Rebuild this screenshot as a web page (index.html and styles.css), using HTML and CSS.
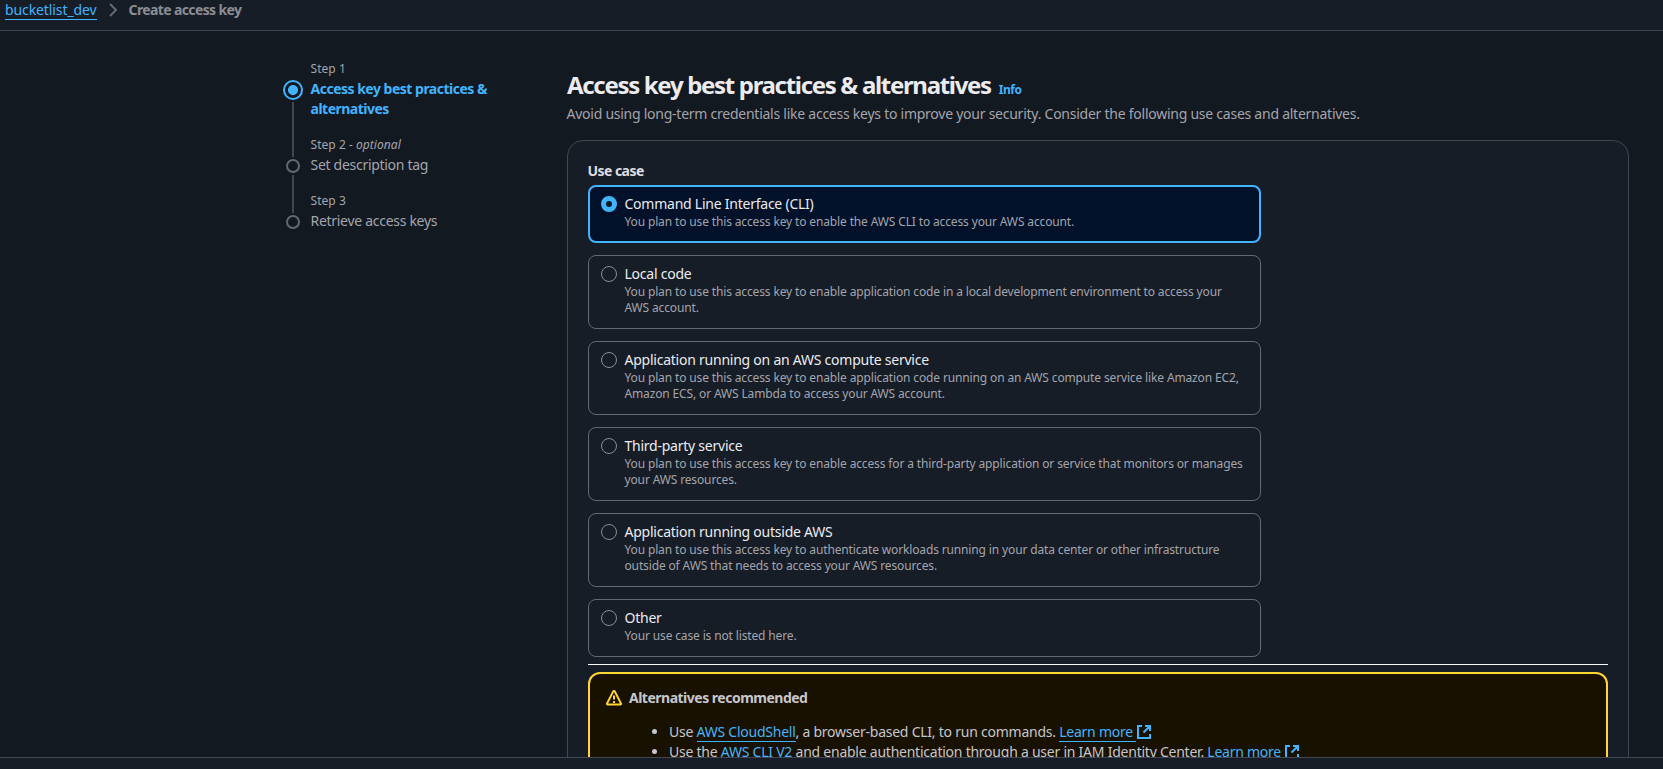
FILE: index.html
```html
<!DOCTYPE html>
<html lang="en">
<head>
<meta charset="utf-8">
<title>Create access key</title>
<link rel="stylesheet" href="styles.css">
</head>
<body>
<svg width="0" height="0" class="defs">
  <symbol id="external" viewBox="0 0 16 16"><path d="M6 2H2v12h12V10M9 2h5v5M13.5 2.5 7.5 8.5"/></symbol>
</svg>
<div class="app">
  <nav class="breadcrumbs">
    <a class="link" href="#">bucketlist_dev</a>
    <svg class="chevron" width="16" height="16" viewBox="0 0 16 16"><path d="m5 2 6 6-6 6"/></svg>
    <span class="current">Create access key</span>
  </nav>
  <div class="content">
    <aside class="steps">
      <div class="step active">
        <div class="rail"><span class="dot"></span><span class="line"></span></div>
        <div class="step-text"><div class="step-label">Step 1</div><div class="step-title">Access key best practices &amp;<br>alternatives</div></div>
      </div>
      <div class="step">
        <div class="rail"><span class="dot"></span><span class="line"></span></div>
        <div class="step-text"><div class="step-label">Step 2 <i>- optional</i></div><div class="step-title">Set description tag</div></div>
      </div>
      <div class="step">
        <div class="rail"><span class="dot"></span></div>
        <div class="step-text"><div class="step-label">Step 3</div><div class="step-title">Retrieve access keys</div></div>
      </div>
    </aside>
    <main class="main">
      <header class="heading"><h1>Access key best practices &amp; alternatives</h1><a class="info" href="#">Info</a></header>
      <p class="intro">Avoid using long-term credentials like access keys to improve your security. Consider the following use cases and alternatives.</p>
      <section class="panel">
        <div class="field-label">Use case</div>
        <div class="tiles">
          <label class="tile selected"><span class="radio"></span><span class="tile-text"><span class="tile-title">Command Line Interface (CLI)</span><span class="tile-desc">You plan to use this access key to enable the AWS CLI to access your AWS account.</span></span></label>
          <label class="tile"><span class="radio"></span><span class="tile-text"><span class="tile-title">Local code</span><span class="tile-desc">You plan to use this access key to enable application code in a local development environment to access your<br>AWS account.</span></span></label>
          <label class="tile"><span class="radio"></span><span class="tile-text"><span class="tile-title">Application running on an AWS compute service</span><span class="tile-desc">You plan to use this access key to enable application code running on an AWS compute service like Amazon EC2,<br>Amazon ECS, or AWS Lambda to access your AWS account.</span></span></label>
          <label class="tile"><span class="radio"></span><span class="tile-text"><span class="tile-title">Third-party service</span><span class="tile-desc">You plan to use this access key to enable access for a third-party application or service that monitors or manages<br>your AWS resources.</span></span></label>
          <label class="tile"><span class="radio"></span><span class="tile-text"><span class="tile-title">Application running outside AWS</span><span class="tile-desc">You plan to use this access key to authenticate workloads running in your data center or other infrastructure<br>outside of AWS that needs to access your AWS resources.</span></span></label>
          <label class="tile"><span class="radio"></span><span class="tile-text"><span class="tile-title">Other</span><span class="tile-desc">Your use case is not listed here.</span></span></label>
        </div>
        <hr class="divider">
        <div class="alert">
          <svg class="warning" width="16" height="16" viewBox="0 0 16 16"><path d="M7.1 1.6 1.1 13.4c-.3.6 0 1.1.7 1.1h12.4c.7 0 1-.5.7-1.1L8.9 1.6c-.4-.8-1.4-.8-1.8 0ZM8 5.5v4M8 11v2"/></svg>
          <div class="alert-body">
            <div class="alert-title">Alternatives recommended</div>
            <ul class="alert-list">
              <li>Use <a class="link" href="#">AWS CloudShell</a>, a browser-based CLI, to run commands. <a class="link ext" href="#">Learn more</a><svg class="external" width="16" height="16"><use href="#external"/></svg></li>
              <li>Use the <a class="link" href="#">AWS CLI V2</a> and enable authentication through a user in IAM Identity Center. <a class="link ext" href="#">Learn more</a><svg class="external" width="16" height="16"><use href="#external"/></svg></li>
            </ul>
          </div>
        </div>
      </section>
    </main>
  </div>
  <footer class="footer"></footer>
</div>
</body>
</html>
```
FILE: styles.css
```css
* { box-sizing: border-box; }
body {
  margin: 0;
  background: #131920;
  color: #c6c6cd;
  font: 14px/20px "Noto Sans", "Open Sans", sans-serif;
  letter-spacing: -0.24px;
}
.defs { display: none; }
.app { display: flex; flex-direction: column; height: 769px; overflow: hidden; white-space: nowrap; }
.link { color: #42b4ff; text-decoration: none; border-bottom: 1px solid #42b4ff; }
.breadcrumbs {
  flex: none;
  display: flex;
  align-items: flex-start;
  height: 31px;
  padding-left: 5px;
  background: #161d26;
  border-bottom: 1px solid #424650;
}
.breadcrumbs .link { height: 20px; letter-spacing: -0.1px; }
.chevron { margin: 2px 8px 0; fill: none; stroke: #656871; stroke-width: 2; }
.current { color: #8c8c94; font-weight: 700; letter-spacing: -0.62px; }
.content { flex: 1; min-height: 0; display: flex; overflow: hidden; }
.steps { flex: none; width: 283px; margin-left: 283px; padding-top: 28px; }
.step { display: flex; gap: 7.5px; }
.step:not(:last-child) .step-text { padding-bottom: 16px; }
.rail { flex: none; display: flex; flex-direction: column; align-items: center; width: 20px; padding-top: 24px; }
.active .rail { padding-top: 21px; }
.dot { flex: none; width: 14px; height: 14px; border: 2px solid #656871; border-radius: 50%; }
.active .dot { width: 20px; height: 20px; border-color: #42b4ff; background: radial-gradient(circle, #42b4ff 4.6px, transparent 5.4px); }
.line { flex: 1; width: 2px; margin: 2px 0 -22px; background: #424650; }
.step-label { font-size: 12px; line-height: 20px; color: #a4a4ad; letter-spacing: 0.05px; }
.step-title { color: #a4a4ad; letter-spacing: -0.29px; }
.active .step-title { color: #42b4ff; font-weight: 700; letter-spacing: -0.5px; }
.main { width: 1063px; padding-top: 38px; }
.heading { display: flex; align-items: baseline; gap: 8px; height: 31px; }
h1 { margin: 0 0 0 1px; color: #ebebf0; font-size: 24px; line-height: 31px; font-weight: 700; letter-spacing: -1.32px; }
.info { color: #42b4ff; font-size: 12px; font-weight: 700; text-decoration: none; letter-spacing: -0.45px; }
.intro { margin: 4px 0 16px 0.5px; color: #a4a4ad; letter-spacing: -0.25px; }
.panel { margin-left: 1px; height: 700px; padding: 20px 20px 0; background: #161d26; border: 1px solid #424650; border-radius: 16px; }
.field-label { color: #dedee3; font-weight: 700; letter-spacing: -0.55px; margin: 0 0 4px -0.5px; }
.tiles { display: grid; gap: 12px; width: 673px; }
.tile { display: flex; gap: 8px; padding: 8px 12px 12px; border: 1px solid #656871; border-radius: 8px; }
.selected { padding: 7px 11px 11px; border: 2px solid #42b4ff; background: #001129; }
.radio { flex: none; width: 16px; height: 16px; margin-top: 2px; border: 1px solid #8c8c94; border-radius: 50%; }
.selected .radio { border: 5px solid #42b4ff; background: #131920; }
.tile-text { display: flex; flex-direction: column; margin-left: -0.5px; }
.tile-title { color: #ebebf0; }
.tile-desc { color: #a4a4ad; font-size: 12px; line-height: 16px; letter-spacing: -0.14px; }
.divider { margin: 7px 0; border: 0; border-top: 1px solid #f9f9fa; }
.alert { display: flex; gap: 7px; height: 300px; padding: 14px 16px; border: 2px solid #ffd633; border-radius: 12px; background: #191100; }
.warning { flex: none; margin-top: 2px; fill: none; stroke: #ffd633; stroke-width: 2; }
.alert-title { font-weight: 700; letter-spacing: -0.5px; }
.alert-list { margin: 14px 0 0; padding-left: 40px; }
.ext { padding-right: 3px; }
.external { margin-bottom: -3px; fill: none; stroke: #42b4ff; stroke-width: 2; }
.footer { flex: none; height: 12px; background: #161d26; border-top: 1px solid #424650; }
```
